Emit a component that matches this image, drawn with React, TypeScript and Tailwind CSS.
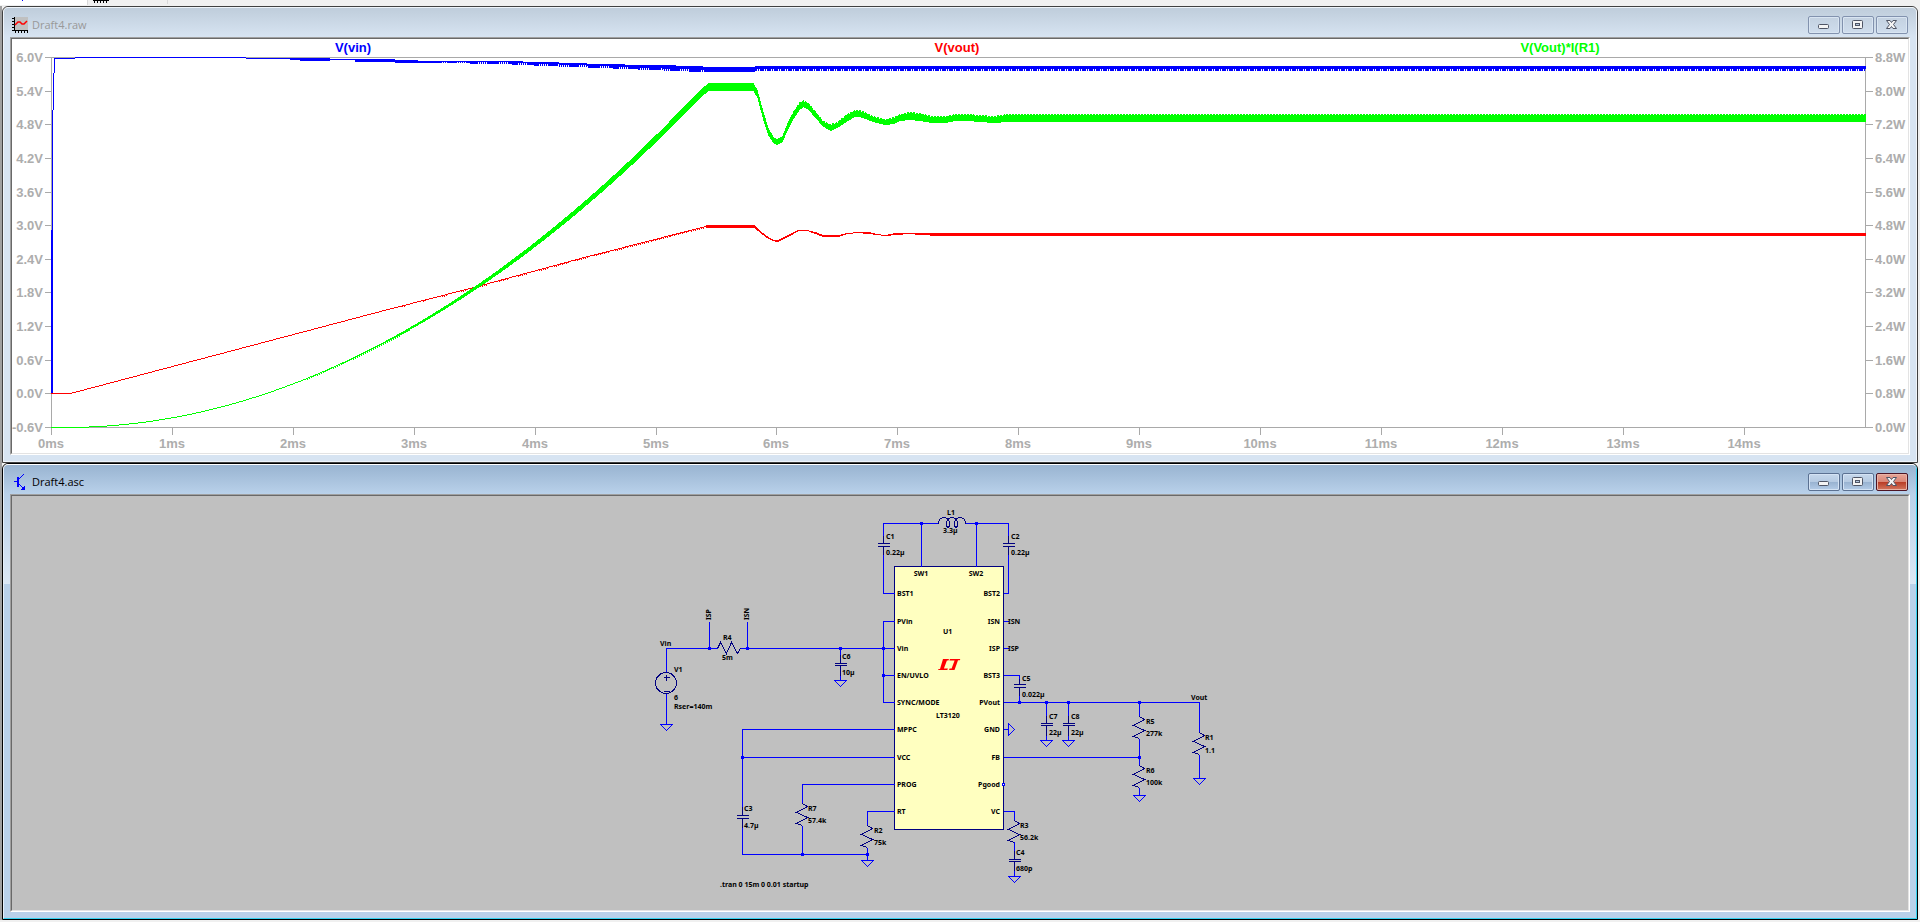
import React from "react";

type Key = [number, number, number];

const SUPPLY: Key[] = [
  [55, 58, 59], [74, 58, 59], [75, 57, 58], [210, 57, 58], [245, 57, 58], [246, 58, 59], [280, 58, 59],
  [299, 58, 60], [300, 58, 61], [329, 58, 61], [330, 59, 60], [354, 59, 60], [355, 59, 62], [394, 59, 62],
  [395, 60, 63], [440, 61, 63], [500, 61, 64], [545, 62, 66], [600, 64, 68], [650, 65, 70],
  [702, 66, 72], [703, 67, 72], [753, 67, 72], [755, 66, 71], [1866, 66, 71],
];

/* Power rises with the square of the output voltage until the limit is reached. */
const POWER_RAMP: Key[] = Array.from({ length: 80 }, (_, i) => {
  const x = 66 + i * 8;
  const y = 427 - 344 * ((x - 64) / 642) ** 2;
  const thickness = Math.max(1, 1 + (x - 340) / 50);
  return [x, y, y + thickness] as Key;
});

const POWER: Key[] = [
  [51, 427, 428], ...POWER_RAMP,
  [708, 83, 91], [753, 83, 91], [757, 90, 98], [763, 112, 121], [768, 128, 136], [773, 137, 143],
  [777, 139, 145], [782, 136, 142], [787, 123, 131], [793, 111, 119], [799, 102, 110], [803, 100, 107],
  [808, 103, 110], [815, 111, 118], [822, 120, 126], [830, 124, 131], [837, 122, 128], [846, 114, 122],
  [854, 110, 117], [859, 110, 117], [865, 112, 119], [873, 116, 122], [885, 119, 125], [893, 117, 124],
  [900, 114, 121], [909, 112, 120], [920, 113, 121], [932, 116, 123], [945, 116, 123], [955, 114, 121],
  [967, 114, 121], [993, 116, 123], [1007, 114, 122], [1866, 114, 122],
];

const OUTPUT: Key[] = [
  [51, 393, 394], [70, 393, 394], [119, 380, 381], [380, 311, 312], [477, 286, 287], [580, 258, 259],
  [705, 226, 227], [706, 225, 228], [754, 225, 228], [760, 231, 233], [765, 235, 237], [773, 240, 241],
  [777, 240, 242], [785, 236, 238], [793, 232, 234], [798, 230, 231], [807, 230, 231], [815, 232, 234],
  [823, 235, 237], [830, 235, 237], [838, 235, 237], [847, 233, 234], [857, 232, 233], [868, 232, 234],
  [877, 234, 235], [885, 235, 236], [895, 233, 235], [910, 233, 234], [920, 233, 235], [940, 233, 236],
  [1866, 233, 236],
];

type Ripple = (x: number) => [number, number];

function band(keys: Key[], ripple: Ripple): string {
  let d = "";
  let i = 0;
  for (let x = keys[0][0]; x < keys[keys.length - 1][0]; x++) {
    while (x >= keys[i + 1][0]) i++;
    const [x0, t0, b0] = keys[i];
    const [x1, t1, b1] = keys[i + 1];
    const f = (x - x0) / (x1 - x0);
    const [dt, db] = ripple(x);
    const top = Math.round(t0 + (t1 - t0) * f) + dt;
    const bottom = Math.max(top + 1, Math.round(b0 + (b1 - b0) * f) + db);
    d += `M${x} ${top}h1V${bottom}h-1z`;
  }
  return d;
}

const hash = (x: number) => (((x * 2654435761) >>> 0) >>> 13) & 7;

const supplyPath = band(SUPPLY, (x) => {
  if (x > 755) return [0, x % 7 === 1 || x % 7 === 3 ? -2 : 0];
  if (x > 703) return [0, 0];
  return [0, x > 440 && hash(x) < 2 ? -2 : 0];
});
const powerPath = band(POWER, (x) => {
  if (x > 790) return [x % 3 === 0 ? 1 : 0, 0];
  return [0, x > 305 && x < 410 && x % 2 ? 1 : 0];
});
const outputPath = band(OUTPUT, (x) => [0, x > 400 && x < 705 && hash(x) < (x - 380) / 80 ? 1 : 0]);

const VOLTS = ["6.0V", "5.4V", "4.8V", "4.2V", "3.6V", "3.0V", "2.4V", "1.8V", "1.2V", "0.6V", "0.0V", "-0.6V"];
const WATTS = ["8.8W", "8.0W", "7.2W", "6.4W", "5.6W", "4.8W", "4.0W", "3.2W", "2.4W", "1.6W", "0.8W", "0.0W"];

function Plot() {
  const rowY = (i: number) => 57 + Math.round((i * 370) / 11);
  const colX = (i: number) => 51 + Math.round(i * 120.9);
  return (
    <svg
      viewBox="12 39 1896 414"
      className="block h-auto w-full bg-white font-['Liberation_Sans',Arial,sans-serif] text-[13px] font-bold"
      role="img"
      aria-label="Waveforms"
    >
      <g fill="none" stroke="#a9a9a9" shapeRendering="crispEdges" transform="translate(0.5 0.5)">
        <path d="M51 57H1865V427H51z" />
        {VOLTS.map((v, i) => (
          <path key={v} d={`M44 ${rowY(i)}H51M1865 ${rowY(i)}H1872`} />
        ))}
        {Array.from({ length: 15 }, (_, i) => (
          <path key={i} d={`M${colX(i)} 427V434`} />
        ))}
      </g>
      <g fill="#adadad">
        {VOLTS.map((v, i) => (
          <text key={v} x={43} y={rowY(i) + 5} textAnchor="end">{v}</text>
        ))}
        {WATTS.map((w, i) => (
          <text key={w} x={1875} y={rowY(i) + 5}>{w}</text>
        ))}
        {Array.from({ length: 15 }, (_, i) => (
          <text key={i} x={colX(i)} y={448} textAnchor="middle">{`${i}ms`}</text>
        ))}
      </g>
      <g textAnchor="middle">
        <text x={353} y={52} fill="#0000ff">V(vin)</text>
        <text x={957} y={52} fill="#ff0000">V(vout)</text>
        <text x={1560} y={52} fill="#00ff00">V(Vout)*I(R1)</text>
      </g>
      <g shapeRendering="crispEdges">
        <path d="M51 393V230h1V110h1V73h1V58h1V73h-1V110h-1V393z" fill="#0000ff" />
        <path d={supplyPath} fill="#0000ff" />
        <path d={outputPath} fill="#ff0000" />
        <path d={powerPath} fill="#00ff00" />
      </g>
    </svg>
  );
}

const WIRES = [
  "M883 536V523H938M965 523H1008V536M883 553V593H894M1008 553V593H1003M921 523V566M976 523V566",
  "M666 672V648H717M709 648V621M747 648V621M740 648H894M840 648V654M840 674V680M666 693V724",
  "M894 621H883V702H894M883 675H894",
  "M894 729H742V806M742 827V854H867M894 757H742M894 784H802V803M802 825V854M894 811H867V825M867 847V860",
  "M1003 621H1008M1003 648H1008M1003 675H1019V678M1019 694V702M1003 702H1199V732M1003 729H1008",
  "M1046 702V715M1046 735V740M1068 702V715M1068 735V740M1003 757H1139M1139 702V716M1139 738V765M1139 787V795",
  "M1199 754V778M1003 811H1014V820M1014 841V850M1014 870V876",
];

const DOTS = [
  [921, 523], [976, 523], [709, 648], [747, 648], [840, 648], [883, 648], [883, 675], [742, 757],
  [802, 854], [867, 854], [1019, 702], [1046, 702], [1068, 702], [1139, 702], [1139, 757],
];

const GROUNDS = [[666, 724], [840, 680], [867, 860], [1046, 740], [1068, 740], [1139, 795], [1199, 778], [1014, 876]];
const RESISTORS = [[802, 803], [867, 825], [1139, 716], [1139, 765], [1199, 732], [1014, 820]];

/* x, upper plate, lower plate, lead start, lead end */
const CAPACITORS = [
  [883, 543, 546, 535, 554], [1008, 543, 546, 535, 554], [840, 663, 665, 654, 675], [742, 815, 818, 806, 827],
  [1019, 684, 687, 678, 695], [1046, 723, 725, 715, 735], [1068, 723, 725, 715, 735], [1014, 859, 861, 850, 870],
];

const LABELS: [number, number, string][] = [
  [886, 539, "C1"], [886, 555, "0.22µ"], [1011, 539, "C2"], [1011, 555, "0.22µ"],
  [947, 515, "L1"], [943, 533, "3.3µ"], [660, 646, "Vin"], [723, 640, "R4"], [722, 660, "5m"],
  [842, 659, "C6"], [842, 675, "10µ"], [674, 672, "V1"], [674, 700, "6"], [674, 709, "Rser=140m"],
  [744, 811, "C3"], [744, 828, "4.7µ"], [808, 811, "R7"], [808, 823, "57.4k"], [874, 833, "R2"], [874, 845, "75k"],
  [720, 887, ".tran 0 15m 0 0.01 startup"], [936, 718, "LT3120"], [943, 634, "U1"],
  [1008, 624, "ISN"], [1008, 651, "ISP"], [1022, 681, "C5"], [1022, 697, "0.022µ"],
  [1049, 719, "C7"], [1049, 735, "22µ"], [1071, 719, "C8"], [1071, 735, "22µ"], [1191, 700, "Vout"],
  [1146, 724, "R5"], [1146, 736, "277k"], [1146, 773, "R6"], [1146, 785, "100k"], [1205, 740, "R1"], [1205, 753, "1.1"],
  [1020, 828, "R3"], [1020, 840, "56.2k"], [1016, 855, "C4"], [1016, 871, "680p"],
];

const PIN_Y = [593, 621, 648, 675, 702, 729, 757, 784, 811];
const LEFT_PINS = ["BST1", "PVin", "Vin", "EN/UVLO", "SYNC/MODE", "MPPC", "VCC", "PROG", "RT"];
const RIGHT_PINS = ["BST2", "ISN", "ISP", "BST3", "PVout", "GND", "FB", "Pgood", "VC"];

function Schematic() {
  return (
    <svg
      viewBox="12 496 1896 414"
      className="block h-auto w-full bg-[#c0c0c0] font-['Noto_Sans','Open_Sans',sans-serif] text-[7px] font-bold"
      role="img"
      aria-label="Schematic"
    >
      <g fill="none" shapeRendering="crispEdges" transform="translate(0.5 0.5)">
        <path d="M894 566H1003V829H894z" fill="#ffffc0" stroke="#000080" />
        <path d={WIRES.join("")} stroke="#0000ff" />
        {GROUNDS.map(([x, y]) => (
          <path key={`${x}-${y}`} d={`M${x - 6} ${y}h12l-6 6z`} stroke="#0000ff" />
        ))}
        <path d="M1008 723v12l6 -6z" stroke="#0000ff" />
        <g stroke="#000080">
          {CAPACITORS.map(([x, a, b, s, e]) => (
            <path key={`${x}-${a}`} d={`M${x} ${s}V${a}M${x - 6} ${a}h12M${x - 6} ${b}h12M${x} ${b}V${e}`} />
          ))}
          {RESISTORS.map(([x, y]) => (
            <path key={`${x}-${y}`} d={`M${x} ${y}l5 3l-11 6l11 5l-11 6l6 2`} />
          ))}
          <path d="M717 648L720 642L726 653L731 642L737 653L740 648" />
          <path d="M938 523C938 515 949 515 949 523C949 528 946 528 946 523C946 515 957 515 957 523C957 528 954 528 954 523C954 515 965 515 965 523" />
          <circle cx={665.5} cy={682.5} r={10.5} />
          <path d="M663 677h6M666 674v6M663 691h6" />
        </g>
        <path d="M1002 783h2v2h-2z" fill="#ffffff" stroke="#0000ff" />
      </g>
      <g fill="#0000ff" shapeRendering="crispEdges">
        {DOTS.map(([x, y]) => (
          <rect key={`${x}-${y}`} x={x - 1} y={y - 1} width={3} height={3} />
        ))}
      </g>
      <g fill="#ff0000">
        <path d="M943 659h6l-.6 1.500h-1.500l-3 8h4l-.6 1.500H938l.6-1h1.400z" />
        <path d="M950 659h10.300l-.5 1.300h-1.800l-3.500 9.700h-5.500l.6-1.500h2l3-8h-5.200z" />
      </g>
      <g fill="#000000">
        {LABELS.map(([x, y, s]) => (
          <text key={`${x}-${y}`} x={x} y={y}>{s}</text>
        ))}
        {PIN_Y.map((y, i) => (
          <text key={y} x={897} y={y + 3}>{LEFT_PINS[i]}</text>
        ))}
        {PIN_Y.map((y, i) => (
          <text key={y} x={1000} y={y + 3} textAnchor="end">{RIGHT_PINS[i]}</text>
        ))}
        <text x={921} y={576} textAnchor="middle">SW1</text>
        <text x={976} y={576} textAnchor="middle">SW2</text>
        <text transform="translate(711 620) rotate(-90)">ISP</text>
        <text transform="translate(749 620) rotate(-90)">ISN</text>
      </g>
    </svg>
  );
}

function PlotIcon() {
  return (
    <svg viewBox="0 0 16 16" className="size-4 shrink-0" shapeRendering="crispEdges" aria-hidden="true">
      <path d="M2 0h14v14H2z" fill="#c0c0c0" />
      <path d="M2 0h1v13h13v1H2zM0 1h2v1H0zM0 4h2v1H0zM0 7h2v1H0zM0 10h2v1H0zM0 13h2v1H0zM3 14h1v2H3zM6 14h1v2H6zM9 14h1v2H9zM12 14h1v2h-1zM15 14h1v2h-1z" fill="#000000" />
      <path d="M3 8L4 7L6 5H8L10 7H12L15 4" fill="none" stroke="#ff0000" strokeWidth="1.500" shapeRendering="auto" />
    </svg>
  );
}

function TransistorIcon() {
  return (
    <svg viewBox="0 0 16 16" className="size-4 shrink-0" shapeRendering="crispEdges" aria-hidden="true">
      <path d="M2 7h3v1H2zM5 3h2v10H5z" fill="#0000ff" />
      <path d="M7 5L12 0M7 10L12 15" fill="none" stroke="#0000ff" />
      <path d="M12.500 16V11.500L8.500 15.500z" fill="#0000ff" />
    </svg>
  );
}

const GLYPHS = {
  Minimize: <rect x="1.500" y="6.500" width="10" height="4" rx="1" fill="#f4f4f4" stroke="#4f5565" />,
  Maximize: (
    <g stroke="#4f5565">
      <rect x="1.500" y="2.500" width="10" height="8" rx="1" fill="#f4f4f4" />
      <rect x="4.500" y="5.500" width="4" height="2" fill="#b4c6dc" />
    </g>
  ),
  Close: (
    <path
      d="M1.500 2.500h3.500l1.500 2l1.500-2h3.500l-3 4l3 4H8l-1.500-2l-1.500 2H1.500l3-4z"
      fill="#f4f4f4"
      stroke="#4f5565"
    />
  ),
};

function CaptionButton({ kind, look }: { kind: keyof typeof GLYPHS; look: string }) {
  return (
    <button type="button" aria-label={kind} className={`flex h-[18px] w-8 items-center justify-center rounded-xs border ${look}`}>
      <svg viewBox="0 0 14 14" className="size-3.5" aria-hidden="true">{GLYPHS[kind]}</svg>
    </button>
  );
}

const IDLE = "border-[#8292ae] bg-linear-to-b from-[#c3d1e0] to-[#cfdded] inset-ring inset-ring-[#d9e5f2]";
const ACTIVE =
  "border-[#5b7192] bg-[linear-gradient(#c6d8ec_0%,#b5cae2_50%,#98b2d0_50%,#b4cce8_100%)] inset-ring inset-ring-[#d4e3f4]";
const DANGER =
  "border-[#4d1424] bg-[linear-gradient(#e8a598_0%,#d98575_50%,#b83a24_50%,#d47860_100%)] inset-ring inset-ring-[#e9b3a6]";

function SubWindow({
  title, icon, active, children,
}: { title: string; icon: React.ReactNode; active: boolean; children: React.ReactNode }) {
  const outer = active ? "border-black" : "border-[#404040]";
  const inner = active
    ? "border-t-white border-l-[#e6f0fa] border-r-[#35d2f0] border-b-[#35d2f0]"
    : "border-[#eef4fa]";
  const bar = active
    ? "bg-linear-to-b from-[#99b4d1] to-[#b9d1ea] text-black"
    : "bg-linear-to-b from-[#bfcddb] to-[#d7e4f2] text-[#999999]";
  const frame = active
    ? "bg-[linear-gradient(#b9d1ea_0px,#dce8f5_90px,#b9d1ea_90px)]"
    : "bg-[#d7e4f2]";
  return (
    <section className={`overflow-hidden rounded-t-md border ${outer}`}>
      <div className={`rounded-t-[5px] border ${inner}`}>
        <header className={`flex h-[29px] items-center rounded-t-sm pt-1 pr-2 pl-2 ${bar}`}>
          {icon}
          <h2 className="ml-1 flex-1 font-['Open_Sans','Noto_Sans',sans-serif] text-[11px] leading-4">{title}</h2>
          <div className="flex gap-0.5">
            <CaptionButton kind="Minimize" look={active ? ACTIVE : IDLE} />
            <CaptionButton kind="Maximize" look={active ? ACTIVE : IDLE} />
            <CaptionButton kind="Close" look={active ? DANGER : IDLE} />
          </div>
        </header>
        <div className={`px-1.5 pb-1.5 ${frame}`}>
          <div className="border border-t-[#a0a0a0] border-r-white border-b-white border-l-[#a0a0a0]">
            <div className="border border-t-[#696969] border-r-[#e3e3e3] border-b-[#e3e3e3] border-l-[#696969]">
              {children}
            </div>
          </div>
        </div>
      </div>
    </section>
  );
}

export default function App() {
  return (
    <main className="min-h-screen bg-[#f0f0f0]">
      <div className="flex h-1.5 w-full">
        <div className="h-[5px] w-[88px] border-r border-[#d9d9d9] bg-white pl-[22px]">
          <div className="h-px w-px bg-[#0000ff]" />
        </div>
        <div className="h-1 w-20 border-r border-[#d9d9d9] pl-[5px]">
          <svg viewBox="0 0 16 3" className="h-[3px] w-4" shapeRendering="crispEdges" aria-hidden="true">
            <path d="M0 0h16v1H0zM1 1h1v2H1zM4 1h1v2H4zM7 1h1v2H7zM10 1h1v2h-1zM13 1h1v2h-1z" fill="#000000" />
          </svg>
        </div>
      </div>
      <div className="flex flex-col border-l-2 border-[#a0a0a0] pr-0.5">
        <SubWindow title="Draft4.raw" icon={<PlotIcon />} active={false}>
          <Plot />
        </SubWindow>
        <SubWindow title="Draft4.asc" icon={<TransistorIcon />} active>
          <Schematic />
        </SubWindow>
      </div>
    </main>
  );
}
